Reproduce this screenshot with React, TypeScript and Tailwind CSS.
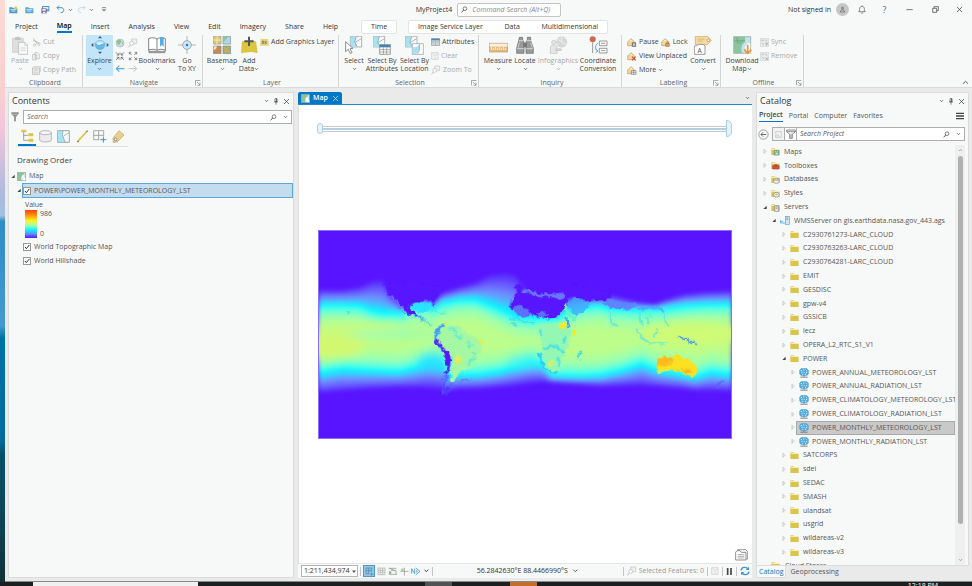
import type { ReactNode } from 'react'

/* ---------- icons ---------- */

// all drawings use three units per pixel
function Ico({ w, h, children }: { w: number; h: number; children: ReactNode }) {
  return (
    <svg width={w} height={h} viewBox={`0 0 ${w * 3} ${h * 3}`} fill="none" className="shrink-0" aria-hidden="true">
      {children}
    </svg>
  )
}

function Chevron({ color = '#555' }: { color?: string }) {
  return (
    <Ico w={5} h={4}>
      <path d="M3 3.500l4.500 4.500 4.500-4.500" stroke={color} strokeWidth="2.400" />
    </Ico>
  )
}

function Close({ color = '#444' }: { color?: string }) {
  return (
    <Ico w={7} h={7}>
      <path d="M3 3l15 15M18 3L3 18" stroke={color} strokeWidth="2.200" />
    </Ico>
  )
}

function Pin() {
  return (
    <Ico w={6} h={7}>
      <path d="M6 2h6v9H6zM3 11.500h12M9 12v8" stroke="#444" strokeWidth="2" />
      <path d="M10 2h2v9h-2z" fill="#444" />
    </Ico>
  )
}

function Magnifier() {
  return (
    <Ico w={7} h={7}>
      <circle cx="12" cy="8" r="5.500" stroke="#444" strokeWidth="2" />
      <path d="M8 12l-6 7" stroke="#444" strokeWidth="2.600" />
    </Ico>
  )
}

function Funnel({ outline }: { outline?: boolean }) {
  if (outline) {
    return (
      <Ico w={10} h={10}>
        <path d="M2 3h26v5l-9 8v12h-8V16L2 8z" fill="#f2f2f2" stroke="#666" strokeWidth="2.200" />
        <path d="M3 8h24M15 15v12" stroke="#666" strokeWidth="2" />
      </Ico>
    )
  }
  return (
    <Ico w={8} h={10}>
      <path d="M1 1h22v5l-8 8v14H9V14L1 6z" fill="#8c8c8c" />
      <path d="M1 7h22" stroke="#ddd" strokeWidth="1.500" />
      <path d="M12 14v14" stroke="#b5b5b5" strokeWidth="2" />
    </Ico>
  )
}

function Launcher() {
  return (
    <Ico w={6} h={6}>
      <path d="M1.500 16V1.500H16M6 6l9 9M15 8v8H7" stroke="#777" strokeWidth="1.800" />
    </Ico>
  )
}

function FolderGlyph({ children }: { children?: ReactNode }) {
  return (
    <Ico w={9} h={9}>
      <path d="M1 4l1-1h9l2 3h12v3H1z" fill="#e6d58a" />
      <path d="M1 9h25v15H1z" fill="#d9c44c" />
      <path d="M3 7.500h21" stroke="#fff7d2" strokeWidth="2" />
      {children}
    </Ico>
  )
}

function GlobeService() {
  return (
    <Ico w={10} h={10}>
      <path d="M6 1h17l6 6v11l-5 5H6l-5-5V7z" fill="#4ba6dc" />
      <path d="M5 8h4M12 5l4 2M20 5l3 3M7 15l4-3M14 13h3M21 14l4-2M10 19h3M18 19l4-1" stroke="#e8f5fc" strokeWidth="3" />
      <path d="M15 22v4M4 27.500h22" stroke="#666" strokeWidth="2.400" />
    </Ico>
  )
}

function ServerGlyph() {
  return (
    <Ico w={10} h={9}>
      <path d="M1 12v9h14M1 16h9" stroke="#4ba6dc" strokeWidth="2.400" />
      <rect x="16" y="1" width="12" height="24" fill="#cfe6f5" stroke="#6b9dc0" strokeWidth="2" />
      <path d="M19 6h6M19 10h6" stroke="#5c87a6" strokeWidth="2" />
    </Ico>
  )
}

function MapSheet({ size = 9 }: { size?: number }) {
  return (
    <svg width={size} height={size} viewBox="0 0 27 27" className="shrink-0" aria-hidden="true">
      <path d="M1 1h25v25H1z" fill="#cfe9ea" stroke="#8b8b7e" strokeWidth="2" />
      <path d="M2 2h22c-6 3-4 7-9 10-4 3-4 7-2 13H2z" fill="#8fc29a" />
      <path d="M17 8l4 3 1 6 3 1v7h-8c2-6-1-8-3-10z" fill="#fff" />
    </svg>
  )
}

function TitleFolder({ badge, color }: { badge?: string; color: string }) {
  return (
    <Ico w={9} h={8}>
      <path d="M1 4h9l3 3h12v15H1z" fill={color} />
      <path d="M4 11h18M7 15h12" stroke="#d7edf9" strokeWidth="2.600" />
      {badge && <circle cx="20" cy="5" r="4.500" fill={badge} />}
    </Ico>
  )
}

function PasteIcon() {
  return (
    <Ico w={16} h={19}>
      <path d="M1 7h33v42H1z" fill="#dedede" stroke="#c9c9c9" strokeWidth="2" />
      <path d="M9 4h5l3-3 4 3h5v8H9z" fill="#c2c2c2" />
      <path d="M20 19h19l8 8v28H20z" fill="#f7f9f8" stroke="#bdbdbd" strokeWidth="2.500" />
      <path d="M38 19v9h9M26 36h15M26 43h15" stroke="#c6c6c6" strokeWidth="2" />
    </Ico>
  )
}

function ScissorsIcon() {
  return (
    <Ico w={9} h={9}>
      <path d="M4 1l12 17M4 7l18 8" stroke="#aaa" strokeWidth="2.200" />
      <circle cx="8" cy="21" r="3.500" stroke="#b5b5b5" strokeWidth="2" />
      <circle cx="21" cy="19" r="3.500" stroke="#b5b5b5" strokeWidth="2" />
    </Ico>
  )
}

function CopyIcon() {
  return (
    <Ico w={9} h={9}>
      <path d="M2 7h10v17H2zM9 2h8l5 5v13H9z" fill="#f7f9f8" stroke="#b3b3b3" strokeWidth="2" />
      <path d="M13 11h5M13 15h5" stroke="#c4c4c4" strokeWidth="2" />
    </Ico>
  )
}

function CopyPathIcon() {
  return (
    <Ico w={9} h={9}>
      <path d="M5 2h20v16" stroke="#b9b9b9" strokeWidth="2" />
      <rect x="1" y="6" width="21" height="19" fill="#ececec" stroke="#b5b5b5" strokeWidth="2" />
      <path d="M5 12h13M6 17v5M11 17v5M16 17v5" stroke="#b9b9b9" strokeWidth="2" />
    </Ico>
  )
}

function ExploreIcon() {
  return (
    <Ico w={18} h={18}>
      <path d="M27 0l6 7H21zM27 54l6-7H21zM0 27l7-6v12zM54 27l-7-6v12z" fill="#3d5968" />
      <circle cx="27" cy="27" r="15" fill="#5fb3e6" />
      <path d="M15 20c4-8 20-9 24 1-3 5-8 2-11 5-4 2-10 1-13-6z" fill="#d9effb" />
      <ellipse cx="27" cy="25" rx="18" ry="8" stroke="#7fc1ea" strokeWidth="2" />
    </Ico>
  )
}

function FullExtentIcon() {
  return (
    <Ico w={10} h={10}>
      <circle cx="15" cy="15" r="12" fill="#c9dde4" stroke="#a9b4b4" strokeWidth="2" />
      <path d="M8 6c6-2 10 0 11 4s-4 4-5 9-6 0-8-4 0-8 2-9z" fill="#8fc08f" />
      <path d="M21 12c4 2 4 6 1 9z" fill="#8fc08f" />
    </Ico>
  )
}

function ZoomSelIcon() {
  return (
    <Ico w={10} h={10}>
      <path d="M11 3h15v14H11z" fill="#efefef" stroke="#c3c3c3" strokeWidth="2" />
      <circle cx="11" cy="16" r="6" fill="#f7f9f8" stroke="#bdbdbd" strokeWidth="2" />
      <path d="M7 21l-5 7" stroke="#bdbdbd" strokeWidth="3" />
    </Ico>
  )
}

function ArrowsIcon({ out = false }: { out?: boolean }) {
  return (
    <Ico w={10} h={10}>
      {out ? (
        <path d="M11 12L4 5M4 10V4h6M19 12l7-7M20 4h6v6M11 19l-7 7M4 20v6h6M19 19l7 7M26 20v6h-6" stroke="#666" strokeWidth="2.300" />
      ) : (
        <path d="M3 4l8 8M5 12h7V5M27 4l-8 8M25 12h-7V5M3 27l8-8M5 19h7v7M27 27l-8-8M25 19h-7v7" stroke="#666" strokeWidth="2.300" />
      )}
    </Ico>
  )
}

function PlainArrow({ right = false }: { right?: boolean }) {
  return (
    <Ico w={10} h={9}>
      {right ? (
        <path d="M2 14h24M17 5l9 9-9 9" stroke="#c0c4c4" strokeWidth="3" />
      ) : (
        <path d="M28 14H4M13 5l-9 9 9 9" stroke="#56abde" strokeWidth="3.500" />
      )}
    </Ico>
  )
}

function BookmarksIcon() {
  return (
    <Ico w={18} h={18}>
      <path d="M2 8c9-4 18-4 25 1 7-5 16-5 25-1v38H2z" fill="#fff" stroke="#6d6d6d" strokeWidth="2.500" />
      <path d="M27 9v33M2 42c10-3 18-3 25 1 7-4 15-4 25-1M2 50h50" stroke="#6d6d6d" strokeWidth="2.500" />
      <path d="M36 3h11v29l-6-5-5 5z" fill="#55aee3" />
    </Ico>
  )
}

function GoToXyIcon() {
  return (
    <Ico w={18} h={18}>
      <circle cx="27" cy="27" r="13" fill="#cfe8f7" stroke="#7d8b92" strokeWidth="2" />
      <path d="M27 0v15M27 39v15M0 27h15M39 27h15" stroke="#999" strokeWidth="2" />
      <circle cx="27" cy="27" r="4" fill="#2d7fb8" />
    </Ico>
  )
}

function BasemapIcon() {
  return (
    <Ico w={18} h={18}>
      <path d="M1 1h23v23H1z" fill="#d9c873" stroke="#999" strokeWidth="2" />
      <path d="M1 12h23M12 1v23" stroke="#f5eab2" strokeWidth="3" />
      <path d="M30 1h23v23H30z" fill="#a7dbe8" stroke="#8a8a8a" strokeWidth="2" />
      <path d="M31 2h14c-5 8-8 9-14 16z" fill="#8fc49d" />
      <path d="M1 30h23v23H1z" fill="#c48a56" stroke="#8a8a8a" strokeWidth="2" />
      <path d="M2 31h10c-2 8-4 10-10 12z" fill="#f1dcc5" />
      <path d="M30 30h23v23H30z" fill="#77bca0" stroke="#8a8a8a" strokeWidth="2" />
      <path d="M33 34l8 6 6-7M34 49l8-8 8 9" stroke="#e2a73c" strokeWidth="5" />
    </Ico>
  )
}

function AddDataIcon() {
  return (
    <Ico w={18} h={18}>
      <path d="M6 16h42l5 35-19-3-31 3z" fill="#dcc541" />
      <path d="M27 2v28M13 16h28" stroke="#555" strokeWidth="6" />
    </Ico>
  )
}

function GraphicsIcon() {
  return (
    <Ico w={9} h={9}>
      <path d="M2 3h22l3 20H0z" fill="#e6d478" />
      <path d="M7 18V9h4v9M14 9l6 9M20 9l-6 9" stroke="#6a6a60" strokeWidth="2" />
    </Ico>
  )
}

function MapTile() {
  return (
    <>
      <path d="M16 1h34v32H16z" fill="#f5f9f9" stroke="#8e9696" strokeWidth="2" />
      <path d="M17 2h17l-5 16 8 14H17z" fill="#a5e2f5" />
      <path d="M49 8L31 19l-2 0M34 2l-5 16 8 15" stroke="#8e9696" strokeWidth="2" />
    </>
  )
}

function SelectIcon() {
  return (
    <Ico w={18} h={18}>
      <MapTile />
      <path d="M2 17l22 20-9 1 6 12-5 3-6-13-8 7z" fill="#fff" stroke="#777" strokeWidth="2.500" />
    </Ico>
  )
}

function SelectAttrIcon() {
  return (
    <Ico w={18} h={19}>
      <g transform="translate(-15 0)">
        <MapTile />
      </g>
      <path d="M20 26h32v29H20z" fill="#fff" stroke="#777" strokeWidth="2" />
      <path d="M20 26h32v8H20z" fill="#3f84b5" />
      <path d="M20 41h32M20 48h32M31 34v21M41 34v21" stroke="#888" strokeWidth="2" />
    </Ico>
  )
}

function SelectLocIcon() {
  return (
    <Ico w={19} h={19}>
      <g transform="translate(-14 0)">
        <MapTile />
      </g>
      <path d="M22 23h33v32H22z" fill="#fff" stroke="#8e9696" strokeWidth="2" />
      <path d="M23 32c10 6 20-4 20-8v15c0 9-8 16-20 15z" fill="#a5e2f5" />
      <path d="M43 24v15c0 9-4 11-8 15" stroke="#8e9696" strokeWidth="2" />
    </Ico>
  )
}

function TableIcon() {
  return (
    <Ico w={9} h={8}>
      <path d="M1 2h25v20H1z" fill="#d9dee1" stroke="#8a8a8a" strokeWidth="2" />
      <path d="M1 2h25v5H1z" fill="#4d87ad" />
      <path d="M13 7v15M4 11h6M4 15h6M17 11h6M17 15h6" stroke="#9aa0a3" strokeWidth="2" />
    </Ico>
  )
}

function ClearIcon() {
  return (
    <Ico w={8} h={8}>
      <path d="M2 2h19v20H2z" fill="#f4f4f4" stroke="#c6c6c6" strokeWidth="2" />
      <path d="M6 5l6 7 6-7M12 12v9" stroke="#cfcfcf" strokeWidth="2" />
    </Ico>
  )
}

function MeasureIcon() {
  return (
    <Ico w={19} h={18}>
      <path d="M1 22h55v26H1z" fill="#e9b97c" stroke="#b99568" strokeWidth="2" />
      <path d="M2 23h53v9H2z" fill="#f6efe2" />
      <path d="M7 33v9M13 36v6M19 33v9M25 36v6M31 33v9M37 36v6M43 33v9M49 36v6" stroke="#fff6e6" strokeWidth="2.500" />
    </Ico>
  )
}

function BinocularIcon() {
  return (
    <Ico w={18} h={18}>
      <path d="M10 4h10v8l4 6v34H2V36l6-22zM34 4h10v10l8 22v16H30V18l4-6z" fill="#9a9a9a" stroke="#666" strokeWidth="2" />
      <path d="M22 20h10v14H22z" fill="#777" />
      <path d="M3 38h20M31 38h20M9 14h13M32 14h13" stroke="#e2e2e2" strokeWidth="2.500" />
      <path d="M10 20l-4 15M44 20l5 15" stroke="#d4d4d4" strokeWidth="2.500" />
    </Ico>
  )
}

function InfographicsIcon() {
  return (
    <Ico w={19} h={18}>
      <circle cx="38" cy="18" r="17" fill="#d8d8d8" />
      <path d="M38 18V1M38 18l14 9M38 18L24 8" stroke="#f7f9f8" strokeWidth="2" />
      <circle cx="14" cy="19" r="6" fill="#e6e6e6" stroke="#bdbdbd" strokeWidth="2" />
      <path d="M4 53V34c0-9 20-9 20 0v19z" fill="#e6e6e6" stroke="#bdbdbd" strokeWidth="2" />
      <path d="M18 37h20v8H18z" fill="#cfcfcf" />
    </Ico>
  )
}

function CoordinateIcon() {
  return (
    <Ico w={19} h={18}>
      <circle cx="11" cy="10" r="9" fill="#cc6a4d" />
      <path d="M11 19v32" stroke="#999" strokeWidth="3" />
      <path d="M31 15h23v14H31zM31 37h23v14H31z" fill="#fff" stroke="#858585" strokeWidth="2.500" />
      <path d="M36 22h13M36 44h13" stroke="#858585" strokeWidth="2.500" />
      <path d="M27 22c-9 3-10 19-1 22M19 39l8 6-7 5" stroke="#4ba6dc" strokeWidth="2.800" />
    </Ico>
  )
}

function LabelIcon({ mark }: { mark: string }) {
  return (
    <Ico w={10} h={9}>
      <path d="M2 12L12 2l10 9v12H2z" fill="#f1d79a" stroke="#c49a55" strokeWidth="2" />
      <circle cx="12" cy="8" r="2" fill="#fff" />
      {mark === 'pause' && <path d="M16 14h10v12H16zM18 15v10M24 15v10" fill="#fff" stroke="#666" strokeWidth="2.500" />}
      {mark === 'lock' && <path d="M14 16h11v9H14zM17 16c0-7 6-7 6 0" fill="#d8a35e" stroke="#9a7a55" strokeWidth="2" />}
      {mark === 'x' && <path d="M15 14l11 11M26 14L15 25" stroke="#cf4b3a" strokeWidth="3.500" />}
      {mark === 'more' && <path d="M13 14h14v11H13zM13 19h14M20 14v11" fill="#fff" stroke="#777" strokeWidth="2" />}
    </Ico>
  )
}

function ConvertIcon() {
  return (
    <Ico w={18} h={19}>
      <path d="M4 1h36l12 12-12 13H4z" fill="#f5d9a0" stroke="#cfa35e" strokeWidth="2" />
      <path d="M11 9h20M11 15h14" stroke="#c9a870" strokeWidth="2" />
      <circle cx="43" cy="13" r="4" fill="#fff" stroke="#a88a5a" strokeWidth="2" />
      <path d="M1 30h7l5-5h14l6 5v25H1z" fill="#fff" stroke="#888" strokeWidth="2.500" />
      <text x="17" y="50" textAnchor="middle" fontSize="20" fill="#555" fontFamily="Open Sans, sans-serif">A</text>
    </Ico>
  )
}

function DownloadMapIcon() {
  return (
    <Ico w={19} h={19}>
      <path d="M2 2h51v50H2z" fill="#bfe3ef" stroke="#8c9b90" strokeWidth="2" />
      <path d="M3 3h34c-2 10 3 12-4 18s-10 14-6 30H3z" fill="#8cc49d" />
      <path d="M3 14c8 4 22-3 32 1M12 3l2 20M18 24l9-9" stroke="#6b997b" strokeWidth="2" />
      <path d="M35 32l5 20h12V22h-9z" fill="#f7fbfb" />
      <path d="M44 26v24M34 41l10 11 11-11" stroke="#ee9433" strokeWidth="5" />
    </Ico>
  )
}

function SyncIcon({ remove }: { remove?: boolean }) {
  return (
    <Ico w={9} h={9}>
      <path d="M1 1h25v25H1z" fill="#e9e9e9" stroke="#d2d2d2" strokeWidth="2" />
      <path d="M4 7h8M15 5l7 6M5 15l7 6" stroke="#bdbdbd" strokeWidth="2.500" />
      <path d={remove ? 'M16 16l9 9M25 16l-9 9' : 'M16 17h8M20 14v9'} stroke="#aaa" strokeWidth="2.500" />
    </Ico>
  )
}

/* ---------- ribbon ---------- */

type BigProps = { width: string; icon: ReactNode; lines: string[]; arrow?: boolean; inline?: boolean; active?: boolean; dim?: boolean }

function BigButton({ width, icon, lines, arrow, inline, active, dim }: BigProps) {
  return (
    <button
      className={`flex shrink-0 flex-col items-center h-[41px] pt-px leading-[8px] whitespace-nowrap ${width} ${active ? 'bg-[#c3e5f9]' : ''} ${dim ? 'text-[#a8a8a8]' : ''}`}
    >
      <span className="flex h-[21px] items-start justify-center">{icon}</span>
      <span className="flex h-[8px] items-center">{lines[0]}</span>
      <span className="flex h-[8px] items-center">
        {lines[1]}
        {(arrow || inline) && <Chevron color={dim ? '#aaa' : '#555'} />}
      </span>
    </button>
  )
}

function SmallButton({ icon, label, dim, arrow }: { icon: ReactNode; label: string; dim?: boolean; arrow?: boolean }) {
  return (
    <button className={`flex items-center gap-[2px] h-[14px] whitespace-nowrap ${dim ? 'text-[#a8a8a8]' : ''}`}>
      {icon}
      <span>{label}</span>
      {arrow && <Chevron />}
    </button>
  )
}

function Group({ name, width, launcher, children }: { name: string; width: string; launcher?: boolean; children: ReactNode }) {
  return (
    <section aria-label={name} className={`relative flex shrink-0 flex-col h-[52px] border-r border-[#d3d5d4] ${width}`}>
      <div className="flex h-[44px] items-start">{children}</div>
      <div className="text-center leading-[8px] text-[#666]">{name}</div>
      {launcher && (
        <button aria-label={`${name} options`} className="absolute right-[1px] bottom-[1px]">
          <Launcher />
        </button>
      )}
    </section>
  )
}

function Ribbon() {
  return (
    <div className="flex h-[54px] shrink-0 items-start border-b border-[#dadada] pt-px">
      <Group name="Clipboard" width="w-[78px] pl-[3px]">
        <BigButton width="w-[24px]" icon={<PasteIcon />} lines={['Paste']} arrow dim />
        <div className="flex flex-col">
          <SmallButton icon={<ScissorsIcon />} label="Cut" dim />
          <SmallButton icon={<CopyIcon />} label="Copy" dim />
          <SmallButton icon={<CopyPathIcon />} label="Copy Path" dim />
        </div>
      </Group>
      <Group name="Navigate" width="w-[120px] pl-[3px]" launcher>
        <BigButton width="w-[27px]" icon={<ExploreIcon />} lines={['Explore']} arrow active />
        <div className="grid w-[26px] grid-cols-2 place-items-center pt-px">
          <button aria-label="Full extent" className="h-[13px]"><FullExtentIcon /></button>
          <button aria-label="Zoom to selection" className="h-[13px]"><ZoomSelIcon /></button>
          <button aria-label="Fixed zoom in" className="h-[13px]"><ArrowsIcon /></button>
          <button aria-label="Fixed zoom out" className="h-[13px]"><ArrowsIcon out /></button>
          <button aria-label="Previous extent" className="h-[13px]"><PlainArrow /></button>
          <button aria-label="Next extent" className="h-[13px]"><PlainArrow right /></button>
        </div>
        <BigButton width="w-[36px]" icon={<BookmarksIcon />} lines={['Bookmarks']} arrow />
        <BigButton width="w-[24px]" icon={<GoToXyIcon />} lines={['Go', 'To XY']} />
      </Group>
      <Group name="Layer" width="w-[136px] pl-[3px]">
        <BigButton width="w-[32px]" icon={<BasemapIcon />} lines={['Basemap']} arrow />
        <BigButton width="w-[22px]" icon={<AddDataIcon />} lines={['Add', 'Data']} inline />
        <SmallButton icon={<GraphicsIcon />} label="Add Graphics Layer" />
      </Group>
      <Group name="Selection" width="w-[140px] pl-[3px]" launcher>
        <BigButton width="w-[24px]" icon={<SelectIcon />} lines={['Select']} arrow />
        <BigButton width="w-[32px]" icon={<SelectAttrIcon />} lines={['Select By', 'Attributes']} />
        <BigButton width="w-[33px]" icon={<SelectLocIcon />} lines={['Select By', 'Location']} />
        <div className="flex flex-col">
          <SmallButton icon={<TableIcon />} label="Attributes" />
          <SmallButton icon={<ClearIcon />} label="Clear" dim />
          <SmallButton icon={<ZoomSelIcon />} label="Zoom To" dim />
        </div>
      </Group>
      <Group name="Inquiry" width="w-[143px] pl-[4px]">
        <BigButton width="w-[30px]" icon={<MeasureIcon />} lines={['Measure']} arrow />
        <BigButton width="w-[24px]" icon={<BinocularIcon />} lines={['Locate']} arrow />
        <BigButton width="w-[42px]" icon={<InfographicsIcon />} lines={['Infographics']} arrow dim />
        <BigButton width="w-[38px]" icon={<CoordinateIcon />} lines={['Coordinate', 'Conversion']} />
      </Group>
      <Group name="Labeling" width="w-[99px] pl-[5px]" launcher>
        <div className="flex w-[62px] flex-col">
          <div className="flex gap-[2px]">
            <SmallButton icon={<LabelIcon mark="pause" />} label="Pause" />
            <SmallButton icon={<LabelIcon mark="lock" />} label="Lock" />
          </div>
          <SmallButton icon={<LabelIcon mark="x" />} label="View Unplaced" />
          <SmallButton icon={<LabelIcon mark="more" />} label="More" arrow />
        </div>
        <BigButton width="w-[28px]" icon={<ConvertIcon />} lines={['Convert']} arrow />
      </Group>
      <Group name="Offline" width="w-[83px] pl-[3px]" launcher>
        <BigButton width="w-[36px]" icon={<DownloadMapIcon />} lines={['Download', 'Map']} inline />
        <div className="flex flex-col">
          <SmallButton icon={<SyncIcon />} label="Sync" dim />
          <SmallButton icon={<SyncIcon remove />} label="Remove" dim />
        </div>
      </Group>
      <button aria-label="Collapse ribbon" className="ml-auto self-end mr-[3px] mb-[2px]">
        <Ico w={7} h={5}>
          <path d="M3 11l7.500-7 7.500 7" stroke="#444" strokeWidth="2.500" />
        </Ico>
      </button>
    </div>
  )
}

function TitleBar() {
  return (
    <header className="flex h-[19px] shrink-0 items-center">
      <div className="flex flex-1 items-center pl-[4px] text-[#444]">
        <button aria-label="New project" className="w-[16px]"><TitleFolder color="#4a9bcb" badge="#f0c94a" /></button>
        <button aria-label="Open project" className="w-[16px]"><TitleFolder color="#5aa7d2" /></button>
        <button aria-label="Save project" className="w-[15px]">
          <Ico w={10} h={9}>
            <path d="M3 3h22v16H3z" fill="#5a96c4" />
            <path d="M6 6h16v7H6z" fill="#e6f2fa" />
            <path d="M1 10h16v15H1z" fill="#7a69a8" />
            <path d="M4 12h10v5H4zM6 20h7v4H6z" fill="#f2effa" />
          </Ico>
        </button>
        <button aria-label="Undo" className="flex items-center gap-[3px] w-[21px]">
          <Ico w={9} h={9}>
            <path d="M3 8h12c11 0 11 15-1 15M9 2L3 8l6 6" stroke="#3f92cd" strokeWidth="3" />
          </Ico>
          <Chevron />
        </button>
        <button aria-label="Redo" className="flex items-center gap-[3px] w-[24px]">
          <Ico w={9} h={9}>
            <path d="M24 8H12C1 8 1 23 13 23M18 2l6 6-6 6" stroke="#bcdcef" strokeWidth="3" />
          </Ico>
          <Chevron />
        </button>
        <button aria-label="Customize">
          <Ico w={6} h={7}>
            <path d="M3 5h12M4 11l5 5 5-5z" stroke="#555" strokeWidth="2" />
          </Ico>
        </button>
      </div>
      <div className="flex items-center gap-[5px] pr-[4px]">
        <span className="text-[#333]">MyProject4</span>
        <label className="flex h-[14px] w-[104px] items-center gap-[4px] rounded-[2px] border border-[#c4c4c4] bg-white px-[3px]">
          <Magnifier />
          <input aria-label="Command search" placeholder="Command Search (Alt+Q)" className="w-full min-w-0 bg-transparent italic outline-none placeholder:text-[#888]" />
        </label>
      </div>
      <div className="flex flex-1 items-center justify-end text-[#333]">
        <button className="flex items-center gap-[5px]">
          <span>Not signed in</span>
          <span className="grid size-[13px] place-items-center rounded-full bg-[#c6c6c6]">
            <Ico w={7} h={7}>
              <circle cx="10.500" cy="6" r="3" stroke="#555" strokeWidth="1.800" />
              <path d="M4 18c0-9 13-9 13 0z" stroke="#555" strokeWidth="1.800" />
            </Ico>
          </span>
        </button>
        <button aria-label="Notifications" className="grid w-[26px] place-items-center">
          <Ico w={8} h={9}>
            <path d="M2 20h20l-3-4V11c0-9-14-9-14 0v5zM9 23c1 3 5 3 6 0M12 1v3" stroke="#555" strokeWidth="2" />
          </Ico>
        </button>
        <button className="w-[19px] text-center text-[9px] text-[#666]">?</button>
        <button aria-label="Minimize" className="grid w-[31px] place-items-center">
          <Ico w={7} h={7}><path d="M1 11h19" stroke="#333" strokeWidth="2" /></Ico>
        </button>
        <button aria-label="Restore" className="grid w-[21px] place-items-center">
          <Ico w={7} h={7}><path d="M2 7h12v12H2zM6 6V2h13v12h-4" stroke="#333" strokeWidth="2" /></Ico>
        </button>
        <button aria-label="Close" className="grid w-[26px] place-items-center"><Close color="#333" /></button>
      </div>
    </header>
  )
}

const tabs = ['Project', 'Map', 'Insert', 'Analysis', 'View', 'Edit', 'Imagery', 'Share', 'Help']

function RibbonTabs() {
  return (
    <nav className="flex h-[15px] shrink-0 items-center pl-[10px] text-[#333]">
      <div className="flex gap-[19px]">
        {tabs.map((t) => (
          <button key={t} className={t === 'Map' ? 'h-[13px] border-b-2 border-[#0078c8] font-semibold text-black' : 'h-[13px]'}>
            {t}
          </button>
        ))}
      </div>
      <button className="ml-[23px] h-[14px] w-[36px] rounded-[2px] border border-[#e4e4e4] bg-white">Time</button>
      <div className="ml-[11px] flex h-[14px] w-[200px] items-center justify-between rounded-[2px] border border-[#e4e4e4] bg-white px-[9px]">
        <button>Image Service Layer</button>
        <button>Data</button>
        <button>Multidimensional</button>
      </div>
    </nav>
  )
}

/* ---------- contents pane ---------- */

function PaneHeader({ title }: { title: string }) {
  return (
    <div className="flex h-[16px] items-center justify-between pr-[3px] pl-[3px]">
      <h2 className="text-[9px] text-[#333]">{title}</h2>
      <div className="flex items-center gap-[4px]">
        <button aria-label={`${title} menu`}><Chevron /></button>
        <button aria-label={`Pin ${title}`}><Pin /></button>
        <button aria-label={`Close ${title}`}><Close /></button>
      </div>
    </div>
  )
}

function Arrow({ open }: { open?: boolean }) {
  return (
    <Ico w={6} h={7}>
      {open ? <path d="M14 5v10H4z" fill="#444" /> : <path d="M6 4l6 6-6 6z" stroke="#aaa" strokeWidth="1.800" />}
    </Ico>
  )
}

function LayerCheck({ label }: { label: string }) {
  return (
    <label className="flex items-center gap-[3px]">
      <span className="relative grid size-[8px] place-items-center">
        <input type="checkbox" defaultChecked className="peer size-[8px] appearance-none border border-[#999] bg-white" />
        <svg viewBox="0 0 24 24" className="pointer-events-none absolute inset-0 hidden size-[8px] peer-checked:block" fill="none" aria-hidden="true">
          <path d="M6 12l4 5 9-11" stroke="#333" strokeWidth="3" />
        </svg>
      </span>
      <span>{label}</span>
    </label>
  )
}

function ContentsTabs() {
  return (
    <div className="ml-[9px] flex w-[110px] border-b border-[#dcdedd]">
      <button aria-label="List by drawing order" className="grid h-[19px] flex-1 place-items-center border-b-2 border-[#0078c8]">
        <Ico w={13} h={13}>
          <path d="M8 8v26h14M8 19h14" stroke="#777" strokeWidth="2" />
          <path d="M1 2h15v8H1zM22 13h15v9H22zM22 29h15v9H22z" fill="#dcc541" />
        </Ico>
      </button>
      <button aria-label="List by source" className="grid h-[18px] flex-1 place-items-center">
        <Ico w={13} h={13}>
          <path d="M2 8v22c0 8 35 8 35 0V8" fill="#ececec" stroke="#999" strokeWidth="2" />
          <ellipse cx="19.500" cy="8" rx="17.500" ry="6" fill="#f7f7f7" stroke="#999" strokeWidth="2" />
        </Ico>
      </button>
      <button aria-label="List by selection" className="grid h-[18px] flex-1 place-items-center">
        <Ico w={13} h={13}>
          <path d="M2 2h35v35H2z" fill="#f5f9f9" stroke="#8e9696" strokeWidth="2.500" />
          <path d="M3 3h15l-2 12 9 21H3z" fill="#a5e2f5" />
          <path d="M18 3l-2 12 9 22M36 8L20 18" stroke="#8e9696" strokeWidth="2" />
        </Ico>
      </button>
      <button aria-label="List by editing" className="grid h-[18px] flex-1 place-items-center">
        <Ico w={13} h={13}>
          <path d="M5 34L31 6" stroke="#dcc541" strokeWidth="5" />
          <path d="M3 36l5-3M31 6l4-4" stroke="#777" strokeWidth="3.500" />
        </Ico>
      </button>
      <button aria-label="List by snapping" className="grid h-[18px] flex-1 place-items-center">
        <Ico w={14} h={13}>
          <path d="M2 2h30v17M2 2v27h17M17 2v27M2 16h30" stroke="#999" strokeWidth="2.500" />
          <path d="M31 20v18M22 29h18" stroke="#4b8fbf" strokeWidth="3" />
        </Ico>
      </button>
      <button aria-label="List by labeling" className="grid h-[18px] flex-1 place-items-center">
        <Ico w={13} h={13}>
          <path d="M21 2l15 13-19 20-13 3-1-14z" fill="#ecd08a" stroke="#c2a258" strokeWidth="2" />
          <circle cx="11" cy="28" r="4" fill="#fff" stroke="#777" strokeWidth="2.500" />
        </Ico>
      </button>
    </div>
  )
}

function Contents() {
  return (
    <aside className="flex w-[286px] shrink-0 flex-col border border-[#dcdcdc] bg-[#f7f9f8] text-[#555]">
      <PaneHeader title="Contents" />
      <div className="flex items-center gap-[4px] pt-px pr-px pl-[2px]">
        <Funnel />
        <div className="flex h-[14px] flex-1 items-center border border-[#adadad] bg-white px-[3px]">
          <input aria-label="Search contents" placeholder="Search" className="min-w-0 flex-1 bg-transparent italic outline-none placeholder:text-[#666]" />
          <button aria-label="Run search"><Magnifier /></button>
          <button aria-label="Search options" className="ml-[6px]"><Chevron /></button>
        </div>
      </div>
      <div className="pt-[3px]">
        <ContentsTabs />
      </div>
      <h3 className="mt-[7px] pl-[8px] text-[8px] leading-[12px] text-[#444]">Drawing Order</h3>
      <ul>
        <li>
          <div className="mt-[3px] flex h-[14px] items-center gap-px pl-px">
            <Arrow open />
            <MapSheet />
            <span className="pl-[2px]">Map</span>
          </div>
          <ul>
            <li>
              <div className="flex items-center pl-[7px]">
                <Arrow open />
                <div className="flex h-[15px] flex-1 items-center border border-[#57a8da] bg-[#c5dbee]">
                  <LayerCheck label="POWER\POWER_MONTHLY_METEOROLOGY_LST" />
                </div>
              </div>
              <div className="pt-px pl-[16px] leading-[11px]">Value</div>
              <div className="flex gap-[3px] pl-[16px]">
                <div className="h-[28px] w-[12px] bg-[linear-gradient(to_bottom,#ff3c14,#ff9a00_20%,#fff02a_38%,#a0ffa8_55%,#10f6ff_70%,#5a9aff_84%,#5a14ff)]" />
                <div className="flex flex-col justify-between leading-[8px]">
                  <span>986</span>
                  <span>0</span>
                </div>
              </div>
            </li>
            <li className="mt-[2px] flex h-[14px] items-center pl-[14px]"><LayerCheck label="World Topographic Map" /></li>
            <li className="flex h-[14px] items-center pl-[14px]"><LayerCheck label="World Hillshade" /></li>
          </ul>
        </li>
      </ul>
    </aside>
  )
}

/* ---------- raster ---------- */

// x, edge of the cold zone, middle of the cyan band
const north = [
  [0, 180, 222], [70, 180, 222], [120, 172, 224], [160, 155, 240], [190, 152, 246], [215, 190, 246], [250, 225, 246],
  [275, 215, 230], [320, 204, 224], [345, 215, 232], [370, 188, 216], [420, 172, 206], [470, 158, 206], [510, 138, 222],
  [560, 132, 244], [591, 140, 257], [640, 200, 262], [720, 225, 258], [745, 200, 240], [790, 200, 228], [840, 205, 222],
  [880, 196, 232], [950, 214, 236], [1010, 222, 234], [1050, 206, 230], [1100, 192, 224], [1160, 186, 220], [1240, 182, 220],
]
const south = [
  [0, 484, 428], [70, 478, 416], [150, 472, 420], [240, 468, 424], [290, 468, 412], [330, 470, 396], [372, 474, 400],
  [385, 480, 432], [420, 474, 434], [480, 472, 432], [540, 468, 424], [591, 462, 410], [640, 456, 396], [670, 452, 404],
  [700, 456, 436], [790, 462, 438], [850, 466, 434], [910, 464, 420], [970, 462, 400], [1020, 466, 420], [1090, 472, 432],
  [1130, 478, 440], [1180, 478, 424], [1240, 480, 432],
]

const ramp: [number, string][] = [
  [0, '#5f3cff'], [0.2, '#6a62ff'], [0.4, '#6f86ff'], [0.58, '#58a8ff'], [0.75, '#2ccfff'], [0.9, '#08f4ff'],
  [1.2, '#30ffee'], [1.5, '#66ffd6'], [1.9, '#8cffbc'], [2.4, '#a8ffa0'], [3.2, '#bcfd8c'],
]

// past the cyan line the bands keep an even spacing
function band(t: number) {
  const at = ([x, edge, cyan]: number[]) => {
    const y = t <= 1 ? edge + (cyan - edge) * t : cyan + Math.sign(cyan - edge) * (t - 1) * 28
    return `${x} ${Math.round(y)}`
  }
  return `M${[...north.map(at), ...[...south].reverse().map(at)].join('L')}Z`
}

function Raster() {
  return (
    <svg viewBox="0 0 1239 621" className="block w-full border border-[#8a6cff] bg-[#5814ff]" role="img" aria-label="Meteorology raster">
      <defs>
        <filter id="soft" x="-5%" y="-10%" width="110%" height="120%"><feGaussianBlur stdDeviation="7" /></filter>
        <filter id="wide" x="-20%" y="-50%" width="140%" height="200%"><feGaussianBlur stdDeviation="14" /></filter>
        <filter id="rough" x="-10%" y="-10%" width="120%" height="120%">
          <feTurbulence type="fractalNoise" baseFrequency="0.060" numOctaves="3" seed="4" />
          <feDisplacementMap in="SourceGraphic" scale="20" xChannelSelector="R" yChannelSelector="G" />
          <feGaussianBlur stdDeviation="2" />
        </filter>
      </defs>
      <g filter="url(#soft)">
        {ramp.map(([t, color]) => (
          <path key={t} d={band(t)} fill={color} stroke={color} strokeWidth="2" />
        ))}
      </g>
      <g filter="url(#wide)">
        <ellipse cx="20" cy="345" rx="120" ry="38" fill="#d2f870" />
        <ellipse cx="120" cy="290" rx="140" ry="14" fill="#c6fb80" />
        <ellipse cx="230" cy="311" rx="150" ry="7" fill="#86fcc4" />
        <ellipse cx="346" cy="396" rx="50" ry="28" fill="#2cdcff" opacity="0.700" />
        <ellipse cx="620" cy="396" rx="50" ry="20" fill="#40f0f0" opacity="0.600" />
        <ellipse cx="1120" cy="310" rx="150" ry="36" fill="#cffb76" />
      </g>

      {/* western hemisphere */}
      <g transform="translate(-24 -18)" filter="url(#rough)">
        <path d="M214 176L236 210L262 232L282 264L310 275L340 286L332 278L300 258L290 240L302 236L340 226L362 228L370 246L372 224L400 190L300 170Z" fill="#5814ff" />
        <path d="M240 212l26 34 20 18" stroke="#6c70ff" strokeWidth="5" fill="none" />
        <path d="M300 240c14-8 40-8 58-4l4 18c-20 10-46 8-60-2z" fill="#2ce4ff" />
        <path d="M310 274l30 8 24 20" stroke="#35d8ff" strokeWidth="5" fill="none" opacity="0.800" />
        <path d="M350 256l30 4 22 6" stroke="#3fe4f0" strokeWidth="4" fill="none" opacity="0.800" />
        <path d="M402 300L440 306L500 342L518 352L500 400L480 430L450 440L430 470L418 470L424 400L388 370L382 330Z" fill="#a4f8a4" />
        <path d="M404 296c-16 8-30 26-28 46 2 22 20 34 34 42 10 10 6 40 0 60-4 24-10 40-8 62" stroke="#3d9cff" strokeWidth="9" fill="none" />
        <path d="M376 342c4 20 20 32 36 42 8 14 2 42-4 64" stroke="#5424ff" strokeWidth="8" fill="none" />
        <path d="M400 378l18 10-2 30-8 8z" fill="#5a14ff" />
        <path d="M404 450l-6 54 14-6 12-22" stroke="#5a60ff" strokeWidth="7" fill="none" />
        <path d="M398 480v26l10 4 8-18z" fill="#5535ff" />
        <path d="M414 312l24 6M430 330l22 8M484 384l14 8M490 400l-20 20M468 352l14 12" stroke="#46e8e8" strokeWidth="7" fill="none" opacity="0.700" />
        <path d="M428 396l16-6 8 20-16 10zM500 346l22 4-6 12zM396 296l12-2-4 14z" fill="#e4ee50" />
        <path d="M446 476l20-14 12 6" stroke="#6c80ff" strokeWidth="10" fill="none" />
        <path d="M108 262h8" stroke="#2cc0e0" strokeWidth="3" />
      </g>

      {/* eastern hemisphere */}
      <g transform="translate(591 -18)" filter="url(#rough)">
        <path d="M-10 222L4 200L-4 184L20 182L36 206L80 200L110 212L150 206L160 240L146 252L130 274L100 280L60 274L40 270L20 262L-20 246Z" fill="#5814ff" />
        <path d="M20 188L40 196L80 206L120 206L150 208L148 222L100 216L70 214L40 206L14 208Z" fill="#6a74ff" />
        <path d="M-10 244l24-4 18 12 20 18-44 8zM60 262l30-2 10 12-26 6z" fill="#5f70ff" />
        <path d="M152 220c20-12 40-4 48 10l40-4 40 0 14-16-60-24-80-8z" fill="#5814ff" />
        <path d="M160 238c8-16 26-28 40-14l26 16-46 40z" fill="#42a8ff" opacity="0.800" />
        <path d="M262 238l18-18 36 14 46 2 2 12-40 6-40-6z" fill="#5e84ff" />
        <path d="M364 238l10 8 70 0 4 22-10-14-66 0z" fill="#52a0ff" opacity="0.800" />
        <path d="M64 306L90 292L130 300L154 290L168 320L160 360L140 400L132 440L104 444L88 420L80 370Z" fill="#94f8b4" />
        <path d="M84 372l36-8 30 20M128 400l4 26M150 335l-6 20M70 312l8 20" stroke="#35dcf0" strokeWidth="9" fill="none" opacity="0.700" />
        <path d="M-20 284l26-2 20 12M14 294l44 0M-18 296l20 4" stroke="#30dcf0" strokeWidth="6" fill="none" opacity="0.700" />
        <path d="M72 384c6 24 10 46 30 58l26 0" stroke="#2cd0f8" strokeWidth="6" fill="none" />
        <path d="M98 404l20-2-2 20-16 4z" fill="#ccf070" />
        <path d="M126 292l24-2 8 24-20-4zM166 320l16-6-8 22z" fill="#f4ea28" />
        <path d="M-14 290l8-2 2 8z" fill="#f0ea40" />
        <path d="M150 236l6 30 22 22" stroke="#66f4c4" strokeWidth="10" fill="none" />
        <path d="M152 280l10 26" stroke="#3a9cf8" strokeWidth="7" />
        <path d="M198 378l-10 30" stroke="#3ce0e4" strokeWidth="5" />
        <path d="M286 262l8 34 14 10M368 250l6 36 10 16M396 278l4 20M446 246l2 34 12 22" stroke="#4ce6e4" strokeWidth="5" fill="none" opacity="0.800" />
        <path d="M362 312l24 34 20 10M426 316l-12 20" stroke="#48dff0" strokeWidth="5" fill="none" opacity="0.800" />
        <path d="M400 356l60 2M396 262l12 20" stroke="#6ef4c8" strokeWidth="5" fill="none" />
        <path d="M490 338l30 8 26 14" stroke="#2c8cf4" strokeWidth="4" fill="none" />
        <path d="M424 402L450 396L470 400L486 390L500 398L520 402L548 430L544 452L530 460L512 450L494 438L466 438L430 446Z" fill="#fce020" />
        <path d="M424 404l40-8 12 10-12 12-40 4zM498 430l26 4 10 10-18 4z" fill="#ffba20" />
        <path d="M428 444l34-6" stroke="#ccf468" strokeWidth="6" />
        <path d="M602 488l26-22" stroke="#5a60ff" strokeWidth="5" />
        <path d="M530 470h12" stroke="#40b4ff" strokeWidth="6" />
      </g>
    </svg>
  )
}

/* ---------- map view ---------- */

const thumb =
  'absolute inset-0 h-full w-full appearance-none bg-transparent pointer-events-none [&::-webkit-slider-thumb]:pointer-events-auto [&::-webkit-slider-thumb]:appearance-none [&::-webkit-slider-thumb]:border [&::-webkit-slider-thumb]:border-[#a9cfe2] [&::-webkit-slider-thumb]:bg-[#e6f3fa]'

function TimeSlider() {
  return (
    <div className="relative mr-[20px] ml-[18px] mt-[15px] h-[17px] shrink-0">
      <div className="mx-[4px] mt-[6px] h-[6px] border-y border-[#c9c9c9] bg-white py-px">
        <div className="h-[2px] bg-[#aed0e2]" />
      </div>
      <input type="range" aria-label="Time start" defaultValue={0} className={`${thumb} [&::-webkit-slider-thumb]:h-[11px] [&::-webkit-slider-thumb]:w-[6px] [&::-webkit-slider-thumb]:rounded-[3px]`} />
      <input type="range" aria-label="Time end" defaultValue={100} className={`${thumb} [&::-webkit-slider-thumb]:h-[17px] [&::-webkit-slider-thumb]:w-[6px] [&::-webkit-slider-thumb]:rounded-r-[5px]`} />
    </div>
  )
}

function Bar() {
  return <span className="h-[9px] w-px bg-[#c4c4c4]" />
}

function StatusBar() {
  return (
    <footer className="flex h-[15px] shrink-0 items-center justify-between border-t border-[#e6e6e6] bg-[#f7f9f8] pr-[2px] pl-[3px] text-[#333]">
      <div className="flex items-center gap-[2px]">
        <span className="relative flex items-center">
          <select aria-label="Scale" className="h-[12px] w-[57px] appearance-none border border-[#b5b5b5] bg-white pl-[2px]">
            <option>1:211,434,974</option>
          </select>
          <svg width="4" height="3" viewBox="0 0 8 6" className="pointer-events-none absolute right-[2px]" aria-hidden="true"><path d="M0 1h8L4 6z" fill="#555" /></svg>
        </span>
        <Bar />
        <button aria-label="Grid snapping" className="grid size-[12px] place-items-center border border-[#4a9bcb] bg-[#92c6e6]">
          <Ico w={9} h={9}><path d="M3 3h17v10M3 3v17h10M11 3v17M3 11h17M20 17v9M16 21h9" stroke="#4f7c99" strokeWidth="2" /></Ico>
        </button>
        <button aria-label="Grid"><Ico w={9} h={9}><path d="M3 3h21v20H3zM10 3v20M17 3v20M3 10h21M3 16h21" stroke="#aaa" strokeWidth="2" /></Ico></button>
        <button aria-label="Corrections"><Ico w={10} h={9}><path d="M2 4h23M2 22h25M9 10h14M5 4l17 8M24 10v12" stroke="#888" strokeWidth="2" /><path d="M3 13h7v7H3z" fill="#7dba8c" /></Ico></button>
        <button aria-label="Dynamic constraints"><Ico w={9} h={9}><path d="M13 2v24M1 13h25" stroke="#888" strokeWidth="2" /><path d="M3 5h8v6H3z" fill="#9bd07c" /></Ico></button>
        <button aria-label="North"><Ico w={10} h={9}><path d="M2 20V5l9 15V5" stroke="#489bd0" strokeWidth="2.500" /><path d="M14 3l13 10-13 11" stroke="#489bd0" strokeWidth="2.500" /><path d="M15 8l7 5-7 6z" fill="#8dc4e6" /></Ico></button>
        <button aria-label="More tools"><Ico w={7} h={6}><path d="M4 5l6 6 6-6" stroke="#333" strokeWidth="2.800" /></Ico></button>
        <Bar />
      </div>
      <button className="flex items-center gap-[4px]">
        56.2842630°E 88.4466990°S
        <Ico w={7} h={6}><path d="M4 5l6 6 6-6" stroke="#444" strokeWidth="2.500" /></Ico>
      </button>
      <div className="flex items-center gap-[3px] text-[#999]">
        <Bar />
        <span className="flex items-center gap-[2px]"><ZoomSelIcon />Selected Features: 0</span>
        <Bar />
        <button aria-label="Clear selection"><ClearIcon /></button>
        <Bar />
        <button aria-label="Pause drawing"><Ico w={7} h={9}><path d="M5 3v21M15 3v21" stroke="#444" strokeWidth="5" /></Ico></button>
        <Bar />
        <button aria-label="Refresh">
          <Ico w={10} h={10}>
            <path d="M3 13C5 2 19 2 24 9M27 17C25 28 11 28 6 21" stroke="#3c97d3" strokeWidth="4" />
            <path d="M27 2v10H17zM3 28V18h10z" fill="#3c97d3" />
          </Ico>
        </button>
      </div>
    </footer>
  )
}

function MapPane() {
  return (
    <main className="flex min-w-0 flex-1 flex-col">
      <div className="flex h-[13px] shrink-0 items-stretch justify-between border-b border-[#1e88d2]">
        <div className="flex items-center gap-[3px] rounded-t-[2px] bg-[#0078c8] px-[3px] text-white">
          <MapSheet />
          <span className="font-semibold">Map</span>
          <button aria-label="Close map" className="ml-px"><Close color="#d5ebfa" /></button>
        </div>
        <button aria-label="View list" className="pr-[2px]"><Chevron /></button>
      </div>
      <div className="flex min-h-0 flex-1 flex-col border-l border-[#dedede] bg-white">
        <TimeSlider />
        <div className="flex min-h-0 flex-1 items-center pr-[20px] pb-[17px] pl-[19px]">
          <Raster />
        </div>
        <button aria-label="Notes" className="mr-[4px] mb-[2px] self-end">
          <Ico w={13} h={12}>
            <path d="M8 6V2h24l6 6v22h-4" stroke="#888" strokeWidth="2.500" />
            <path d="M2 10l4-5h9l4 5h14v23H2z" fill="#fff" stroke="#777" strokeWidth="2.500" />
            <path d="M8 17h20M8 22h20M8 27h20" stroke="#888" strokeWidth="2" />
          </Ico>
        </button>
      </div>
      <StatusBar />
    </main>
  )
}

/* ---------- catalog pane ---------- */

type Node = { name: string; level: number; icon?: string; open?: boolean; selected?: boolean }

const nodes: Node[] = [
  { name: 'Maps', level: 0, icon: 'maps' },
  { name: 'Toolboxes', level: 0, icon: 'tools' },
  { name: 'Databases', level: 0, icon: 'db' },
  { name: 'Styles', level: 0, icon: 'styles' },
  { name: 'Servers', level: 0, icon: 'servers', open: true },
  { name: 'WMSServer on gis.earthdata.nasa.gov_443.ags', level: 1, icon: 'wms', open: true },
  { name: 'C2930761273-LARC_CLOUD', level: 2 },
  { name: 'C2930763263-LARC_CLOUD', level: 2 },
  { name: 'C2930764281-LARC_CLOUD', level: 2 },
  { name: 'EMIT', level: 2 },
  { name: 'GESDISC', level: 2 },
  { name: 'gpw-v4', level: 2 },
  { name: 'GSSICB', level: 2 },
  { name: 'lecz', level: 2 },
  { name: 'OPERA_L2_RTC_S1_V1', level: 2 },
  { name: 'POWER', level: 2, open: true },
  { name: 'POWER_ANNUAL_METEOROLOGY_LST', level: 3, icon: 'layer' },
  { name: 'POWER_ANNUAL_RADIATION_LST', level: 3, icon: 'layer' },
  { name: 'POWER_CLIMATOLOGY_METEOROLOGY_LST', level: 3, icon: 'layer' },
  { name: 'POWER_CLIMATOLOGY_RADIATION_LST', level: 3, icon: 'layer' },
  { name: 'POWER_MONTHLY_METEOROLOGY_LST', level: 3, icon: 'layer', selected: true },
  { name: 'POWER_MONTHLY_RADIATION_LST', level: 3, icon: 'layer' },
  { name: 'SATCORPS', level: 2 },
  { name: 'sdei', level: 2 },
  { name: 'SEDAC', level: 2 },
  { name: 'SMASH', level: 2 },
  { name: 'ulandsat', level: 2 },
  { name: 'usgrid', level: 2 },
  { name: 'wildareas-v2', level: 2 },
  { name: 'wildareas-v3', level: 2 },
]

const indents = ['pl-[5px]', 'pl-[14px]', 'pl-[24px]', 'pl-[33px]']

function NodeIcon({ kind }: { kind?: string }) {
  if (kind === 'layer') return <GlobeService />
  if (kind === 'wms') return <ServerGlyph />
  return (
    <FolderGlyph>
      {kind === 'maps' && <path d="M10 11h13v13H10zM13 20l3-6 5 3" fill="#cfe8d4" stroke="#5c8f74" strokeWidth="2.500" />}
      {kind === 'tools' && <path d="M5 14h19v10H5zM11 14v-3h7v3" fill="#cf4f3b" stroke="#b04434" strokeWidth="2" />}
      {kind === 'db' && <path d="M8 13c0-4 16-4 16 0v9c0 4-16 4-16 0zM8 13c0 4 16 4 16 0" fill="#f2f2f2" stroke="#888" strokeWidth="2" />}
      {kind === 'styles' && <path d="M7 17l5-6h9l4 6-4 7h-9zM12 17h8" fill="#f2f2f2" stroke="#888" strokeWidth="2" />}
      {kind === 'servers' && <path d="M11 8h12v17H11zM14 12h6M14 16h6" fill="#efefef" stroke="#777" strokeWidth="2" />}
    </FolderGlyph>
  )
}

function Catalog() {
  return (
    <aside className="flex w-[213px] shrink-0 flex-col text-[#555]">
      <div className="flex min-h-0 flex-1 flex-col border border-[#dcdcdc] bg-[#f7f9f8]">
        <PaneHeader title="Catalog" />
        <div className="flex h-[13px] items-center justify-between pr-[4px] pl-[2px]">
          <div className="flex gap-[6px]">
            <button className="h-[12px] border-b border-[#0078c8] font-semibold text-[#444]">Project</button>
            <button className="h-[12px]">Portal</button>
            <button className="h-[12px]">Computer</button>
            <button className="h-[12px]">Favorites</button>
          </div>
          <button aria-label="Catalog options"><Ico w={8} h={8}><path d="M0 4h24M0 12h24M0 20h24" stroke="#444" strokeWidth="4" /></Ico></button>
        </div>
        <div className="mt-[5px] flex items-center gap-[3px] pr-[3px] pl-px">
          <button aria-label="Back">
            <Ico w={11} h={11}>
              <circle cx="16.500" cy="16.500" r="14" stroke="#777" strokeWidth="2" />
              <path d="M25 16.500H9M15 10l-6 6.500 6 6.500" stroke="#555" strokeWidth="2.500" />
            </Ico>
          </button>
          <div className="flex h-[14px] flex-1 items-center border border-[#adadad] bg-white">
            <button aria-label="Up" className="grid h-full w-[11px] place-items-center bg-[#f2f2f2]">
              <Ico w={7} h={7}><path d="M2 8V2h17v17h-8M2 12h8v7H2z" stroke="#bdbdbd" strokeWidth="2" /></Ico>
            </button>
            <button aria-label="Filter" className="grid h-full w-[13px] place-items-center border-x border-[#adadad]"><Funnel outline /></button>
            <input aria-label="Search project" placeholder="Search Project" className="min-w-0 flex-1 bg-transparent pl-[3px] italic outline-none placeholder:text-[#555]" />
            <button aria-label="Run search"><Magnifier /></button>
            <button aria-label="Search options" className="mr-[3px] ml-[6px]"><Chevron /></button>
          </div>
        </div>
        <div className="mt-[4px] mr-[3px] flex min-h-0 flex-1">
          <ul className="flex min-w-0 flex-1 flex-col">
            {nodes.map((n) => (
              <li key={n.name} className={`flex min-h-0 flex-1 items-center ${indents[n.level]}`}>
                <Arrow open={n.open} />
                <div className={`flex h-full flex-1 items-center whitespace-nowrap border ${n.level === 3 ? 'gap-[3px]' : 'gap-[4px]'} pl-[2px] ${n.selected ? 'border-[#a8a8a8] bg-[#c9c9c9]' : 'border-transparent'}`}>
                  <NodeIcon kind={n.icon} />
                  <span>{n.name}</span>
                </div>
              </li>
            ))}
            <li className="h-[6px] shrink-0 overflow-hidden">
              <div className="flex h-[14px] items-center gap-[5px] pl-[14px]">
                <FolderGlyph />
                <span>Cloud Stores</span>
              </div>
            </li>
          </ul>
          <div className="flex w-[10px] flex-col items-center bg-[#efefef] py-[3px]">
            <Ico w={5} h={5}><path d="M3 9l4.500-4 4.500 4" stroke="#888" strokeWidth="2" /></Ico>
            <div className="mt-[3px] w-[5px] flex-1 rounded-full bg-[#b0b0b0]" />
            <div className="h-[34px]" />
            <Chevron color="#888" />
          </div>
        </div>
      </div>
      <div className="flex h-[12px] shrink-0 items-center">
        <button className="h-full border border-t-0 border-[#dcdcdc] bg-[#f7f9f8] px-[2px] text-[#0078c8]">Catalog</button>
        <button className="h-full px-[4px]">Geoprocessing</button>
      </div>
    </aside>
  )
}

export default function App() {
  return (
    <div className="flex h-screen w-full flex-col overflow-hidden font-['Open_Sans','Noto_Sans',sans-serif] text-[7px] leading-[10px]">
      <div className="flex min-h-0 flex-1">
        <div className="w-[5px] shrink-0 bg-[linear-gradient(to_bottom,#fddad2,#fbd0cf_14%,#f3c6da_22%,#a9b9dc_34%,#a6c1e0_37%,#2f8cc8_38%,#4499cf_56%,#0072a8_58%,#006a9c_76%,#08506a_78%,#0c4a5e_86%,#123038)]" />
        <div className="flex min-w-0 flex-1 flex-col border-b border-[#8a8a8a] bg-[#f7f9f8] text-[#444]">
          <TitleBar />
          <RibbonTabs />
          <Ribbon />
          <div className="flex min-h-0 flex-1 gap-[4px] bg-[#eaeaea] pt-[4px] pr-[3px] pb-[3px] pl-[3px]">
            <Contents />
            <MapPane />
            <Catalog />
          </div>
        </div>
      </div>
      <div className="flex h-[4px] shrink-0 bg-[#1c1f20]">
        <div className="ml-[33px] w-[165px] bg-[#f0f0f0]" />
        <div className="ml-[227px] w-[27px] bg-[#505254]" />
        <div className="ml-[58px] w-[27px] bg-[#c06f2e]" />
        <div className="ml-auto h-[4px] overflow-hidden pr-[34px] leading-[7px] text-white">12:18 PM</div>
      </div>
    </div>
  )
}
